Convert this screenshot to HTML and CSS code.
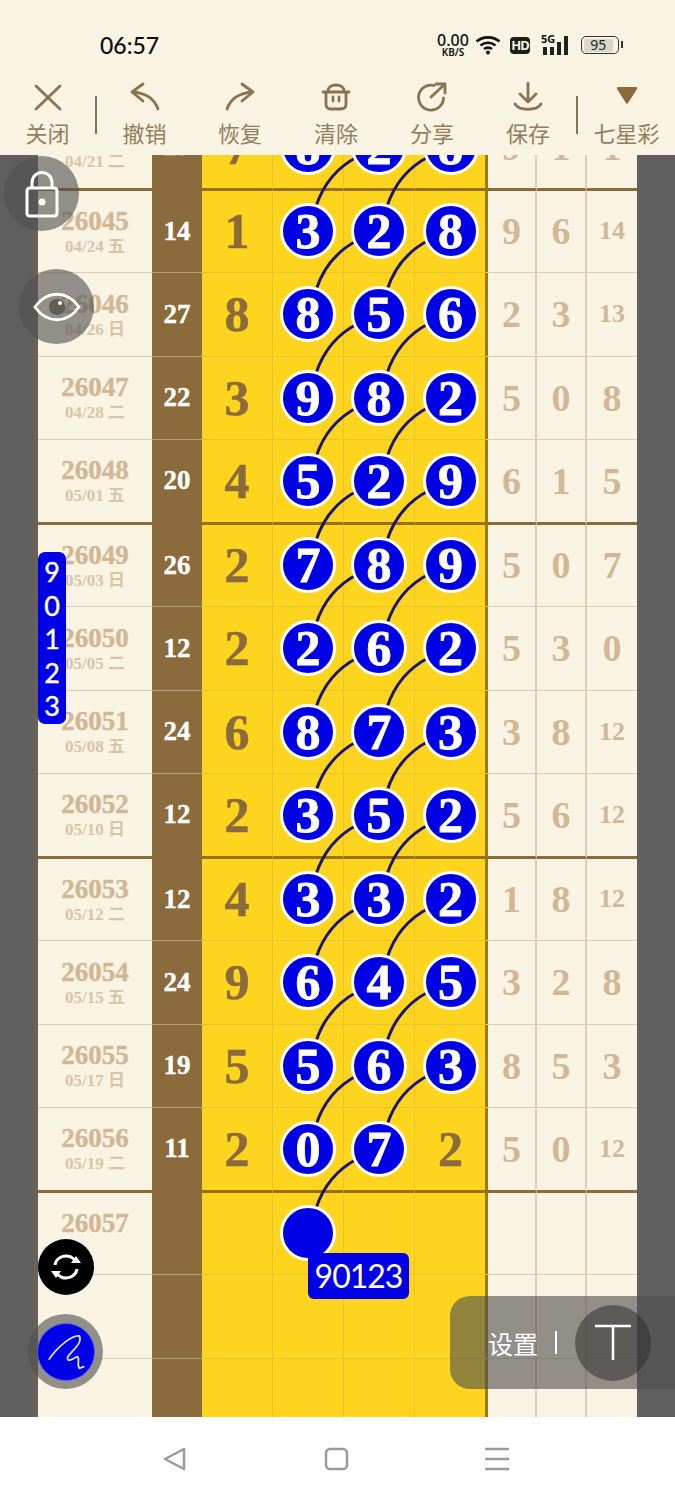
FILE: index.html
```html
<!DOCTYPE html>
<html lang="zh-CN">
<head>
    <meta charset="UTF-8">
    <meta name="viewport" content="width=device-width, initial-scale=1.0">
    <title>七星彩</title>
    <link rel="stylesheet" href="styles.css">
</head>
<body>

<div class="page">
    <header class="top">
        <div class="status">
            <span class="time">06:57</span>
            <div class="status-icons">
                <div class="speed"><b>0.00</b><small>KB/S</small></div>
                <svg class="wifi" width="26" height="20" viewBox="0 0 26 20">
                    <path d="M1.5 6.5C8 1 18 1 24.5 6.5M5.5 10.500C10 6.800 16 6.800 20.500 10.500M9 14C11.500 12.200 14.500 12.200 17 14" fill="none" stroke="#111" stroke-width="2.600"/>
                    <circle cx="13" cy="17.500" r="2" fill="#111"/>
                </svg>
                <span class="hd">HD</span>
                <div class="signal">
                    <small>5G</small>
                    <i class="b1"></i><i class="b1"></i><i class="b2"></i><i class="b3"></i>
                </div>
                <div class="battery"><span>95</span></div>
            </div>
        </div>
        <nav class="tools">
            <div class="tool">
                <svg width="30" height="30" viewBox="0 0 30 30"><path d="M3 4L27 27M27 4L3 27"/></svg>
                <span>关闭</span>
            </div>
            <i class="split"></i>
            <div class="tool">
                <svg width="30" height="30" viewBox="0 0 30 30"><path d="M13 2L2 10L13 19M2 10C16 11 24 16 28 27"/></svg>
                <span>撤销</span>
            </div>
            <div class="tool">
                <svg width="30" height="30" viewBox="0 0 30 30"><path d="M17 2L28 10L17 19M28 10C14 11 6 16 2 27"/></svg>
                <span>恢复</span>
            </div>
            <div class="tool">
                <svg width="30" height="30" viewBox="0 0 30 30"><path d="M7 9C7 1 23 1 23 9M2 10H28M5 10V22C5 26 7 27 10 27H20C23 27 25 26 25 22V10M12 15V19M18 15V19"/></svg>
                <span>清除</span>
            </div>
            <div class="tool">
                <svg width="30" height="30" viewBox="0 0 30 30"><path d="M17 3.500A12.500 12.500 0 1 0 26.500 16M14 15L28 2M19 2H28V11"/></svg>
                <span>分享</span>
            </div>
            <div class="tool">
                <svg width="30" height="30" viewBox="0 0 30 30"><path d="M15 1V20M7 12L15 20L23 12M2 22C6 29 24 29 28 22"/></svg>
                <span>保存</span>
            </div>
            <i class="split"></i>
            <div class="tool">
                <svg width="30" height="30" viewBox="0 0 30 30"><path class="solid" d="M6 5H24C25 5 25.500 6 25 7L16 21C15.500 22 14.500 22 14 21L5 7C4.500 6 5 5 6 5Z"/></svg>
                <span>七星彩</span>
            </div>
        </nav>
    </header>

    <main class="board">
        <div class="grid" id="grid">
            <svg class="curves" id="curves" width="599" height="1336"></svg>
        </div>
    </main>

    <footer class="navbar">
        <svg width="26" height="26" viewBox="0 0 26 26"><path d="M22 3V23L3 13Z"/></svg>
        <svg width="26" height="26" viewBox="0 0 26 26"><rect x="3" y="3" width="21" height="20" rx="4"/></svg>
        <svg width="26" height="26" viewBox="0 0 26 26"><path d="M1 3H25M1 13H25M1 23H25"/></svg>
    </footer>

    <!-- floating buttons -->
    <div class="float-btn lock">
        <svg width="36" height="48" viewBox="0 0 36 48"><path d="M8 18V13C8 -1 28 -1 28 13V18M6 18H30C32 18 33 19 33 21V43C33 45 32 46 30 46H6C4 46 3 45 3 43V21C3 19 4 18 6 18Z"/><circle class="dot" cx="18" cy="32" r="3.500"/></svg>
    </div>
    <div class="float-btn eye">
        <svg width="48" height="32" viewBox="0 0 48 32"><path d="M2 16C14 -1 34 -1 46 16C34 33 14 33 2 16Z"/><circle class="pupil" cx="24" cy="16" r="8"/><circle class="dot" cx="27" cy="12" r="2"/></svg>
    </div>
    <div class="pick-list"><span>9</span><span>0</span><span>1</span><span>2</span><span>3</span></div>
    <div class="pick-tag">90123</div>
    <div class="refresh">
        <svg width="34" height="34" viewBox="0 0 34 34"><path d="M6 15C7 8 15 4 22 7C24 8 26 10 27 12M28 19C27 26 19 30 12 27C10 26 8 24 7 22"/><path class="solid" d="M22 13H32L27 6ZM2 21H12L7 28Z"/></svg>
    </div>
    <div class="pen">
        <div class="pen-inner">
            <svg width="40" height="40" viewBox="0 0 40 40"><path d="M3.300 27C13 13 26.700 3 33.300 4C36.700 11.300 26.700 18 21.700 24.700C20 31.300 28.300 26.300 31 24.700C35 26.300 30 31.300 33.300 36.300L37.700 34.700"/></svg>
        </div>
    </div>
    <div class="settings">
        <span class="settings-text">设置</span>
        <i class="settings-bar"></i>
        <div class="t-btn"><svg width="38" height="38" viewBox="0 0 38 38"><path d="M1 2H37M19 2V36"/></svg></div>
    </div>
</div>

<script src="app.js"></script>

</body>
</html>
```

FILE: styles.css
```css
* {
    box-sizing: border-box;
}
body {
    margin: 0;
    font-family: "Liberation Serif", "Noto Sans CJK SC", serif;
}
.page {
    position: relative;
    width: 675px;
    height: 1500px;
    display: flex;
    flex-direction: column;
    overflow: hidden;
    background-color: #ffffff;
}

/* top */
.top {
    height: 155px;
    background-color: #f9f3e3;
    flex: none;
}
.status {
    height: 76px;
    padding: 28px 56px 0 100px;
    display: flex;
    justify-content: space-between;
    align-items: flex-start;
}
.time {
    font-family: Lato, sans-serif;
    font-size: 23px;
    font-weight: 500;
    line-height: 34px;
    color: #0c0c0c;
}
.status-icons {
    display: flex;
    align-items: center;
    height: 34px;
}
.speed {
    width: 34px;
    font-family: "Noto Sans", sans-serif;
    color: #111111;
    text-align: center;
    display: flex;
    flex-direction: column;
}
.speed b {
    font-size: 16px;
    line-height: 13px;
    font-weight: 500;
}
.speed small {
    font-size: 10px;
    line-height: 10px;
    font-weight: 600;
}
.wifi {
    margin-left: 5px;
}
.hd {
    margin-left: 9px;
    width: 20px;
    height: 17px;
    border-radius: 4px;
    background-color: #1d1d1b;
    color: #f9f3e3;
    font: bold 13px/17px "Noto Sans", sans-serif;
    text-align: center;
    letter-spacing: -1px;
}
.signal {
    position: relative;
    width: 30px;
    height: 20px;
    margin-left: 11px;
    display: flex;
    align-items: flex-end;
    gap: 3px;
    padding-left: 2px;
}
.signal small {
    position: absolute;
    left: 0;
    top: -3px;
    font: bold 11px/13px "Noto Sans", sans-serif;
    color: #111111;
}
.signal i {
    width: 4px;
    background-color: #222222;
}
.signal .b1 {
    height: 8px;
}
.signal .b2 {
    height: 13px;
}
.signal .b3 {
    height: 19px;
}
.battery {
    position: relative;
    width: 38px;
    height: 18px;
    margin-left: 10px;
    border: 1.500px solid #333333;
    border-radius: 5px;
    padding: 1.500px;
}
.battery span {
    display: block;
    height: 100%;
    width: 90%;
    border-radius: 2px;
    background-color: #d8d5cb;
    font: 14px/12px "Noto Sans", sans-serif;
    color: #222222;
    text-align: center;
}
.battery::after {
    content: "";
    position: absolute;
    right: -5px;
    top: 4px;
    width: 2px;
    height: 7px;
    background-color: #333333;
}
.tools {
    height: 79px;
    position: relative;
    display: grid;
    grid-template-columns: 95px 2px 95px 96px 96px 96px 96px 2px 97px;
    padding-top: 6px;
}
.tool {
    display: flex;
    flex-direction: column;
    align-items: center;
    color: #937f60;
    font-family: "Noto Sans CJK SC", sans-serif;
    font-size: 22px;
    line-height: 30px;
}
.tool svg {
    fill: none;
    stroke: #8b7350;
    stroke-width: 2.800;
    stroke-linecap: round;
    stroke-linejoin: round;
}
.tool svg .solid {
    fill: #8b6a3c;
    stroke: none;
}
.tool span {
    margin-top: 5px;
    white-space: nowrap;
}
.split {
    width: 2px;
    height: 38px;
    margin-top: 14px;
    background-color: #8b7350;
}

/* board */
.board {
    flex: 1;
    overflow: hidden;
    background-color: #5f5f5f;
    padding: 0 38px;
}
.grid {
    position: relative;
    margin-top: -49px;
    width: 599px;
    box-shadow: -5px 0 0 #6a6258;
}
.curves {
    position: absolute;
    left: 0;
    top: 0;
    z-index: 1;
    fill: none;
    stroke: #1d1478;
    stroke-width: 3px;
}
.row {
    display: grid;
    grid-template-columns: 114px 50px 71px 71px 71px 73px 49px 50px 50px;
    height: 83.500px;
}
.cell {
    display: flex;
    align-items: center;
    justify-content: center;
    border-bottom: 1px solid #dbcdb4;
    background-color: #f9f3e3;
}
.issue {
    flex-direction: column;
    padding-top: 1px;
}
.issue b {
    font-size: 27px;
    line-height: 30px;
    color: #d2b796;
    -webkit-text-stroke: 0.4px #d2b796;
    min-height: 30px;
}
.issue span {
    font-size: 17px;
    line-height: 22px;
    font-weight: bold;
    color: #d8c4a9;
    min-height: 22px;
}
.sum {
    background-color: #8b6a3c;
    border-bottom: 1px solid #b49f7f;
    color: #ffffff;
    font-size: 27px;
    font-weight: bold;
    -webkit-text-stroke: 0.4px #ffffff;
}
.num {
    background-color: #fdd51e;
    border-bottom-color: #e8c233;
    border-right: 1px solid #e8c233;
    font-size: 50px;
    font-weight: bold;
    color: #8b6a3c;
    -webkit-text-stroke: 0.5px #8b6a3c;
}
.num.last {
    border-right: 0;
    padding-right: 2px;
    box-shadow: inset -3px 0 0 #9c7a14;
}
.rest {
    font-size: 38px;
    font-weight: bold;
    color: #d2b796;
    border-right: 2px solid #dccdb3;
}
.rest.small {
    font-size: 26px;
}
.rest.end {
    border-right: 0;
}
.ball {
    position: relative;
    z-index: 2;
    width: 56px;
    height: 56px;
    border-radius: 50%;
    border: 3px solid #ffffff;
    background-color: #0000e4;
    color: #ffffff;
    font-size: 50px;
    line-height: 50px;
    text-align: center;
    -webkit-text-stroke: 0.8px #ffffff;
}
.row.thick .cell {
    border-bottom: 2px solid #8b6a3c;
}
.row.thick .num {
    border-bottom-color: #99700f;
}
.row.thick .sum {
    border-bottom-color: #8b6a3c;
}
.row.thick + .row .cell {
    border-top: 1px solid #8b6a3c;
}
.row.thick + .row .num {
    border-top-color: #99700f;
}
.row.thick + .row .sum {
    border-top-color: #8b6a3c;
}

/* bottom nav */
.navbar {
    height: 83px;
    flex: none;
    position: relative;
    z-index: 3;
    background-color: #ffffff;
    display: grid;
    grid-template-columns: 162px 26px 135px 26px 135px 26px;
    align-items: center;
}
.navbar svg {
    fill: none;
    stroke: #9a9a9a;
    stroke-width: 2.500px;
    stroke-linejoin: round;
}
.navbar svg:nth-child(1) {
    grid-column: 2;
}
.navbar svg:nth-child(2) {
    grid-column: 4;
}
.navbar svg:nth-child(3) {
    grid-column: 6;
}

/* floating stuff */
.float-btn {
    position: absolute;
    width: 75px;
    height: 75px;
    border-radius: 50%;
    background-color: rgba(80, 80, 80, 0.62);
    display: flex;
    align-items: center;
    justify-content: center;
    z-index: 3;
}
.float-btn svg {
    fill: none;
    stroke: #ffffff;
    stroke-width: 3px;
}
.float-btn .dot {
    fill: #ffffff;
    stroke: none;
}
.float-btn .pupil {
    fill: #635c52;
    stroke: none;
}
.lock {
    left: 4px;
    top: 156px;
}
.eye {
    left: 19px;
    top: 269px;
}
.pick-list {
    position: absolute;
    left: 38px;
    top: 552px;
    width: 28px;
    height: 172px;
    padding-top: 3px;
    border-radius: 7px;
    background-color: #0000e6;
    color: #ffffff;
    font-family: Lato, sans-serif;
    font-size: 27px;
    -webkit-text-stroke: 0.4px #ffffff;
    text-align: center;
    display: flex;
    flex-direction: column;
    line-height: 33.500px;
    z-index: 3;
}
.pick-tag {
    position: absolute;
    left: 308px;
    top: 1253px;
    width: 101px;
    height: 46px;
    border-radius: 6px;
    background-color: #0000e6;
    color: #ffffff;
    font-family: Lato, sans-serif;
    font-size: 32px;
    letter-spacing: -1px;
    line-height: 46px;
    text-align: center;
    z-index: 3;
}
.refresh {
    position: absolute;
    left: 38px;
    top: 1239px;
    width: 56px;
    height: 56px;
    border-radius: 50%;
    background-color: #000000;
    display: flex;
    align-items: center;
    justify-content: center;
    z-index: 3;
}
.refresh svg {
    fill: none;
    stroke: #ffffff;
    stroke-width: 3px;
}
.refresh svg .solid {
    fill: #ffffff;
    stroke: none;
}
.pen {
    position: absolute;
    left: 28px;
    top: 1314px;
    width: 75px;
    height: 75px;
    border-radius: 50%;
    background-color: rgba(80, 80, 80, 0.62);
    display: flex;
    align-items: center;
    justify-content: center;
    z-index: 3;
}
.pen-inner {
    width: 58px;
    height: 58px;
    border-radius: 50%;
    border: 1px solid #5a5af0;
    background-color: #0000e6;
    display: flex;
    align-items: center;
    justify-content: center;
}
.pen-inner svg {
    fill: none;
    stroke: #dfe3ff;
    stroke-width: 1.800px;
    stroke-linecap: round;
    stroke-linejoin: round;
}
.settings {
    position: absolute;
    left: 450px;
    top: 1296px;
    width: 225px;
    height: 93px;
    border-radius: 20px 0 0 20px;
    background-color: rgba(80, 80, 80, 0.62);
    display: flex;
    align-items: center;
    padding-left: 38px;
    z-index: 3;
}
.settings-text {
    font-family: "Noto Sans CJK SC", sans-serif;
    font-size: 25px;
    color: #ffffff;
}
.settings-bar {
    width: 2px;
    height: 23px;
    margin-left: 17px;
    background-color: #ffffff;
}
.t-btn {
    width: 76px;
    height: 76px;
    margin-left: 18px;
    border-radius: 50%;
    background-color: rgba(50, 50, 50, 0.55);
    display: flex;
    align-items: center;
    justify-content: center;
}
.t-btn svg {
    fill: none;
    stroke: #ffffff;
    stroke-width: 2.500px;
}
```

FILE: app.js
```js
// issue, date, sum, first number, three balls, last three
const rows = [
    ['26044', '04/21 二', '23', '7', [8, 2, 8], [9, 1, 1]],
    ['26045', '04/24 五', '14', '1', [3, 2, 8], [9, 6, 14]],
    ['26046', '04/26 日', '27', '8', [8, 5, 6], [2, 3, 13]],
    ['26047', '04/28 二', '22', '3', [9, 8, 2], [5, 0, 8]],
    ['26048', '05/01 五', '20', '4', [5, 2, 9], [6, 1, 5]],
    ['26049', '05/03 日', '26', '2', [7, 8, 9], [5, 0, 7]],
    ['26050', '05/05 二', '12', '2', [2, 6, 2], [5, 3, 0]],
    ['26051', '05/08 五', '24', '6', [8, 7, 3], [3, 8, 12]],
    ['26052', '05/10 日', '12', '2', [3, 5, 2], [5, 6, 12]],
    ['26053', '05/12 二', '12', '4', [3, 3, 2], [1, 8, 12]],
    ['26054', '05/15 五', '24', '9', [6, 4, 5], [3, 2, 8]],
    ['26055', '05/17 日', '19', '5', [5, 6, 3], [8, 5, 3]],
    ['26056', '05/19 二', '11', '2', [0, 7, '2'], [5, 0, 12]],
    ['26057', '', '', '', [' ', '', ''], ['', '', '']],
    ['', '', '', '', ['', '', ''], ['', '', '']],
    ['', '', '', '', ['', '', ''], ['', '', '']]
];

const ROW_H = 83.5;
const grid = document.getElementById('grid');
const curves = document.getElementById('curves');
let paths = '';

function ballCell(value, last) {
    const cls = last ? 'cell num last' : 'cell num';
    if (value === '') return `<div class="${cls}"></div>`;
    // a string digit is shown plain, without the ball
    if (typeof value === 'string' && value !== ' ') return `<div class="${cls}">${value}</div>`;
    return `<div class="${cls}"><span class="ball">${value}</span></div>`;
}

rows.forEach(function(r, i) {
    const row = document.createElement('div');
    row.className = (i % 4 === 0 && i < 13) ? 'row thick' : 'row';
    row.innerHTML = `
        <div class="cell issue"><b>${r[0]}</b><span>${r[1]}</span></div>
        <div class="cell sum">${r[2]}</div>
        <div class="cell num">${r[3]}</div>
        ${ballCell(r[4][0])}
        ${ballCell(r[4][1])}
        ${ballCell(r[4][2], true)}
        ${r[5].map(function(n, k) {
            const small = n > 9 ? ' small' : '';
            const end = k === 2 ? ' end' : '';
            return `<div class="cell rest${small}${end}">${n}</div>`;
        }).join('')}
    `;
    grid.appendChild(row);

    // line up to the ball on the right in the row above
    if (i > 0 && i < 14) {
        const y = ROW_H * i;
        paths += `<path d="M278 ${y + 17}Q289 ${y - 17} 320 ${y - 33}"/>`;
        if (r[4][1] !== '') {
            paths += `<path d="M349 ${y + 17}Q360 ${y - 17} 391 ${y - 33}"/>`;
        }
    }
});
curves.innerHTML = paths;
```
